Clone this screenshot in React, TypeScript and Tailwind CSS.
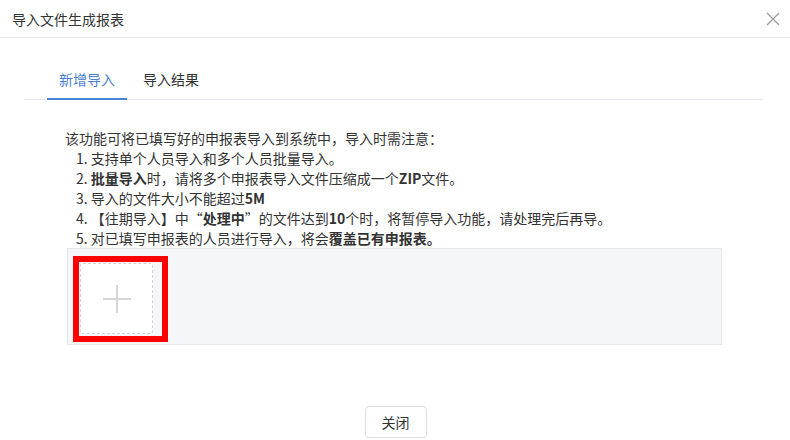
const notes: React.ReactNode[] = [
  <>1. 支持单个人员导入和多个人员批量导入。</>,
  <>
    2. <b className="font-bold">批量导入</b>时，请将多个申报表导入文件压缩成一个<b className="font-bold">ZIP</b>文件。
  </>,
  <>
    3. 导入的文件大小不能超过<b className="font-bold">5M</b>
  </>,
  <>
    4. 【往期导入】中“<b className="font-bold">处理中</b>”的文件达到<b className="font-bold">10</b>个时，将暂停导入功能，请处理完后再导。
  </>,
  <>
    5. 对已填写申报表的人员进行导入，将会<b className="font-bold">覆盖已有申报表。</b>
  </>
];

export default function App() {
  return (
    <div
      className="relative h-[440px] w-[790px] overflow-hidden bg-white text-[#303133]"
      style={{ fontFamily: '"Noto Sans CJK SC", "Noto Sans", sans-serif' }}
    >
      <div className="flex h-[38px] items-center justify-between border-b border-[#e8e8e8] pl-[12px] pr-[10px]">
        <span className="text-[14px] leading-none text-[#333]">导入文件生成报表</span>
        <svg width="14" height="14" viewBox="0 0 14 14" fill="none" className="mr-[0px]">
          <path d="M1 1l12 12M13 1L1 13" stroke="#9a9a9a" strokeWidth="1.2" />
        </svg>
      </div>

      <div className="pl-[25px] pr-[27px] pt-[22px]">
        <div className="flex h-[40px] border-b border-[#e4e7ed] pl-[22px]">
          <div className="relative flex w-[80px] items-center justify-center text-[14px] text-[#4a7fd4]">
            新增导入
            <span className="absolute bottom-[-1px] left-0 h-[2px] w-full bg-[#4a86da]" />
          </div>
          <div className="ml-[4px] flex w-[80px] items-center justify-center text-[14px] text-[#303133]">导入结果</div>
        </div>

        <div className="ml-[40px] mt-[28px] text-[14px] leading-[20px] text-[#333]">
          <div>该功能可将已填写好的申报表导入到系统中，导入时需注意：</div>
          {notes.map((n, i) => (
            <div key={i} className="pl-[11px]">
              {n}
            </div>
          ))}
        </div>

        <div className="relative ml-[42px] h-[97px] w-[655px] border border-[#e6e8ec] bg-[#f5f6fa] pl-[12px] pt-[14px]">
          <div className="flex h-[71px] w-[73px] items-center justify-center rounded-[3px] border border-dashed border-[#cfd2d8] bg-white">
            <svg width="32" height="32" viewBox="0 0 32 32" fill="none">
              <path d="M16 2v28M2 16h28" stroke="#d6d6d6" strokeWidth="2" />
            </svg>
          </div>
          <div className="absolute left-[5px] top-[7px] h-[86px] w-[95px] border-[6px] border-[#ff0000]" />
        </div>
      </div>

      <div className="mt-[61px] flex justify-center">
        <button
          type="button"
          className="ml-[1px] h-[32px] w-[62px] rounded-[4px] border border-[#dcdfe6] bg-white text-[14px] text-[#333]"
        >
          关闭
        </button>
      </div>
    </div>
  );
}
